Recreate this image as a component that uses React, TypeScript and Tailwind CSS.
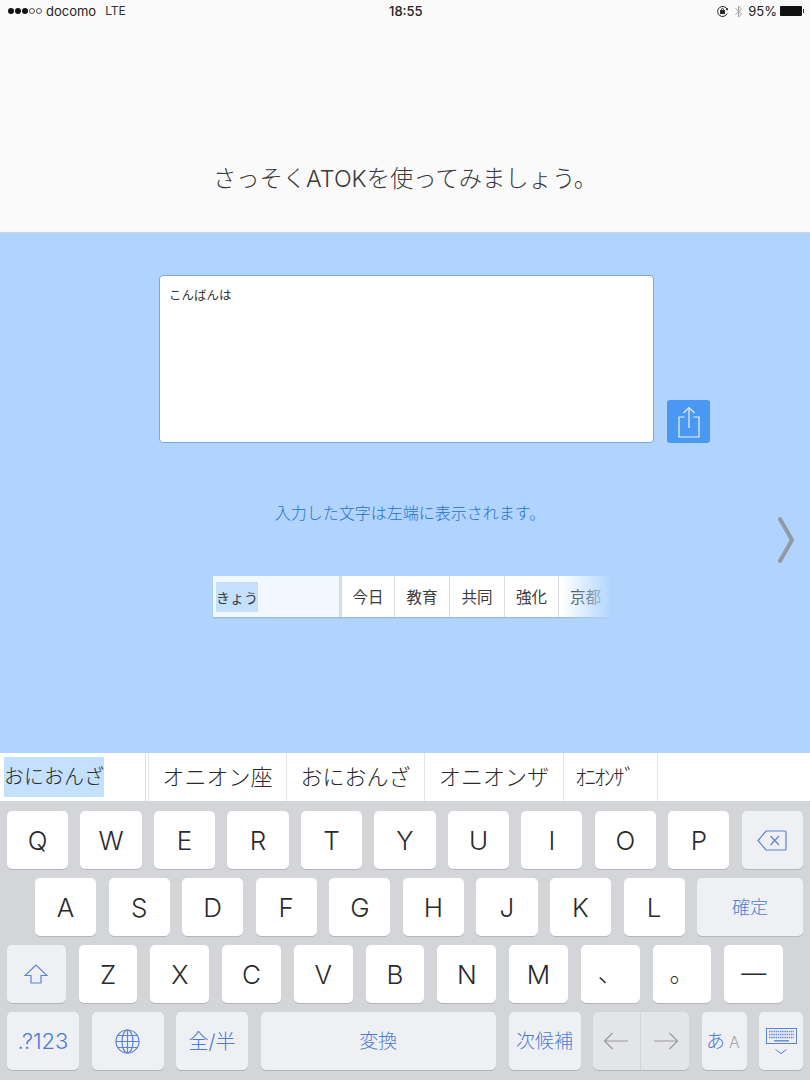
import { ReactNode } from 'react';

const FONT = "font-['Inter','Noto_Sans_CJK_JP',sans-serif]";

function StatusBar() {
    return (
        <div className="relative flex h-[22px] items-center pl-[8px] pr-[6px] text-[13px] leading-none text-[#222]">
            <div className="flex items-center">
                {[0, 1, 2].map((i) => (
                    <span key={i} className="mr-[1px] h-[6px] w-[6px] rounded-full bg-[#111]" />
                ))}
                {[0, 1].map((i) => (
                    <span key={i} className="mr-[1px] h-[6px] w-[6px] rounded-full border border-[#555]" />
                ))}
            </div>
            <span className="ml-[3px]">docomo</span>
            <span className="ml-[9px] text-[12px] text-[#333]">LTE</span>
            <span className="absolute left-[389px] top-[5px] font-medium">18:55</span>
            <div className="ml-auto flex items-center">
                <svg width="13" height="13" viewBox="0 0 13 13" fill="none" stroke="#222" strokeWidth="1">
                    <path d="M11.2 4.5A5 5 0 1 0 11.2 8.5" />
                    <path d="M10 4.6l1.4.2.2-1.6" />
                    <rect x="4.6" y="5.6" width="3.8" height="3" fill="#222" />
                    <path d="M5.4 5.6V4.6a1.1 1.1 0 0 1 2.2 0v1" />
                </svg>
                <svg className="ml-[6px]" width="7" height="13" viewBox="0 0 7 13" fill="none" stroke="#999" strokeWidth="0.9">
                    <path d="M0.5 3.5l6 5.5-3 3V1l3 3-6 5.5" />
                </svg>
                <span className="ml-[6px]">95%</span>
                <div className="ml-[3px] flex items-center">
                    <div className="h-[10px] w-[22px] rounded-[1px] bg-[#111]" />
                    <div className="ml-[1px] h-[4px] w-[1px] bg-[#333]" />
                </div>
            </div>
        </div>
    );
}

function CandidateCell({ className, children }: { className: string; children: ReactNode }) {
    return <div className={`flex h-full items-center justify-center ${className}`}>{children}</div>;
}

function Key({ children, fn = false, className = 'flex-1' }: { children: ReactNode; fn?: boolean; className?: string }) {
    return (
        <div
            className={`flex h-[58px] items-center justify-center rounded-[5px] shadow-[0_1px_0_#b4b6bb] ${
                fn ? 'bg-[#eff0f3] font-light text-[#4a7bd6]' : 'bg-white text-[#2a2a2a]'
            } ${className}`}
        >
            {children}
        </div>
    );
}

function Letters({ keys }: { keys: string[] }) {
    return (
        <>
            {keys.map((k) => (
                <Key key={k}>
                    <span className="text-[26px] font-light">{k}</span>
                </Key>
            ))}
        </>
    );
}

function BackspaceIcon() {
    return (
        <svg width="30" height="21" viewBox="0 0 30 21" fill="none" stroke="#5b84d8" strokeWidth="1.2">
            <path d="M9 1h19a1 1 0 0 1 1 1v17a1 1 0 0 1-1 1H9L1 10.5z" />
            <path d="M13.5 6l8.5 9M22 6l-8.5 9" />
        </svg>
    );
}

function ShiftIcon() {
    return (
        <svg width="24" height="20" viewBox="0 0 24 20" fill="none" stroke="#5b84d8" strokeWidth="1.2">
            <path d="M12 1L1 11.5h6V19h10v-7.5h6z" />
        </svg>
    );
}

function GlobeIcon() {
    return (
        <svg width="25" height="25" viewBox="0 0 25 25" fill="none" stroke="#5b84d8" strokeWidth="1.2">
            <circle cx="12.5" cy="12.5" r="11.5" />
            <ellipse cx="12.5" cy="12.5" rx="5.5" ry="11.5" />
            <path d="M12.5 1v23M1 12.5h23M2.8 6.5h19.4M2.8 18.5h19.4" />
        </svg>
    );
}

function ArrowIcon({ flip = false }: { flip?: boolean }) {
    return (
        <svg width="26" height="18" viewBox="0 0 26 18" fill="none" stroke="#9a9a9e" strokeWidth="1.2" className={flip ? 'rotate-180' : ''}>
            <path d="M25 9H1.5M9.5 1L1.5 9l8 8" />
        </svg>
    );
}

function KeyboardIcon() {
    return (
        <div className="flex flex-col items-center gap-[5px]">
            <svg width="31" height="16" viewBox="0 0 31 16" fill="none" stroke="#5b84d8">
                <rect x="0.5" y="0.5" width="30" height="15" strokeWidth="1" />
                <path d="M3 3.5h25M3 6.5h25M3 9.5h25" strokeWidth="1.6" strokeDasharray="1.4 0.8" />
                <path d="M8 12.8h15" strokeWidth="1.4" />
            </svg>
            <svg width="12" height="5" viewBox="0 0 12 5" fill="none" stroke="#5b84d8" strokeWidth="1">
                <path d="M0.5 0.5L6 4.5l5.5-4" />
            </svg>
        </div>
    );
}

function Keyboard() {
    return (
        <div className="flex flex-col gap-[9px] bg-[#d3d5d9] pt-[10px] h-[279px]">
            <div className="flex gap-[12.4px] px-[7px]">
                <Letters keys={['Q', 'W', 'E', 'R', 'T', 'Y', 'U', 'I', 'O', 'P']} />
                <Key fn>
                    <BackspaceIcon />
                </Key>
            </div>
            <div className="flex gap-[12.4px] pl-[35px] pr-[7px]">
                <Letters keys={['A', 'S', 'D', 'F', 'G', 'H', 'J', 'K', 'L']} />
                <Key fn className="w-[106px] shrink-0">
                    <span className="text-[18px]">確定</span>
                </Key>
            </div>
            <div className="flex gap-[13px] pl-[7px] pr-[27px]">
                <Key fn>
                    <ShiftIcon />
                </Key>
                <Letters keys={['Z', 'X', 'C', 'V', 'B', 'N', 'M']} />
                {['、', '。', '—'].map((k) => (
                    <Key key={k}>
                        <span className="text-[25px] font-light">{k}</span>
                    </Key>
                ))}
            </div>
            <div className="flex gap-[12.5px] px-[7px]">
                <Key fn className="w-[72px]">
                    <span className="pt-[1px] text-[22px]">.?123</span>
                </Key>
                <Key fn className="w-[72px]">
                    <GlobeIcon />
                </Key>
                <Key fn className="w-[72px]">
                    <span className="pt-[2px] text-[20px]">全/半</span>
                </Key>
                <Key fn className="flex-1">
                    <span className="pt-[2px] text-[19px]">変換</span>
                </Key>
                <Key fn className="w-[72px]">
                    <span className="pt-[2px] text-[19px]">次候補</span>
                </Key>
                <div className="flex h-[58px] w-[96px] rounded-[5px] bg-[#e4e5e8] shadow-[0_1px_0_#b4b6bb]">
                    <div className="flex flex-1 items-center justify-center border-r border-[#d3d5d9]">
                        <ArrowIcon />
                    </div>
                    <div className="flex flex-1 items-center justify-center pl-[2px]">
                        <ArrowIcon flip />
                    </div>
                </div>
                <Key fn className="w-[45px]">
                    <span className="mr-[2px] flex items-center pt-[2px]">
                        <span className="text-[19px]">あ</span>
                        <span className="ml-[4px] text-[16px] text-[#a5a6a9]">A</span>
                    </span>
                </Key>
                <Key fn className="w-[44px]">
                    <KeyboardIcon />
                </Key>
            </div>
        </div>
    );
}

export default function App() {
    return (
        <div className={`relative flex h-[1080px] w-[810px] flex-col overflow-hidden bg-[#b0d4fe] ${FONT}`}>
            {/* Header */}
            <div className="h-[233px] border-b border-[#c9d6e4] bg-[#fafafa]">
                <StatusBar />
                <p className="mt-[139px] text-center text-[23.3px] font-light leading-9 text-[#3a3a3a]">
                    さっそくATOKを使ってみましょう。
                </p>
            </div>

            {/* Lesson area */}
            <div className="relative flex flex-1 flex-col">
                <div className="ml-[159px] mt-[42px] flex items-end gap-[13px]">
                    <div className="h-[168px] w-[495px] rounded-[4px] border border-[#78a8de] bg-white px-[9px] py-[10px] text-[12.5px] leading-[20px] text-[#333]">
                        こんばんは
                    </div>
                    <div className="flex h-[43px] w-[43px] items-center justify-center rounded-[3px] bg-[#4a98f2]">
                        <svg width="22" height="32" viewBox="0 0 22 32" fill="none" stroke="#eaf3ff" strokeWidth="1.2">
                            <path d="M6.5 11H1v20h20V11h-5.5" />
                            <path d="M11 22V1.5M5.5 7L11 1.5 16.5 7" />
                        </svg>
                    </div>
                </div>
                <p className="mt-[60px] pl-[10px] text-center text-[16px] font-light leading-5 text-[#2a70cc]">
                    入力した文字は左端に表示されます。
                </p>

                <svg
                    className="absolute left-[776px] top-[282px]"
                    width="20"
                    height="50"
                    viewBox="0 0 20 50"
                    fill="none"
                    stroke="#8f9aa6"
                    strokeWidth="4"
                    strokeLinecap="round"
                >
                    <path d="M4 4l12 21L4 46" />
                </svg>

                {/* Inline candidate sample */}
                <div className="relative ml-[213px] mt-[53px] flex h-[41px] w-[399px] items-stretch text-[15.5px] text-[#3a3a3a] shadow-[0_1px_1px_#9db8d8]">
                    <div className="flex w-[126px] items-center bg-[#f1f8ff] pl-[3px]">
                        <span className="flex h-[30px] items-center bg-[#c3e0fd] pt-[1px] text-[14px]">きょう</span>
                    </div>
                    <div className="w-[3px] bg-[#d8dde4]" />
                    <div className="flex flex-1 gap-[1px] bg-[#d9dee6]">
                        <CandidateCell className="w-[52px] bg-white pt-[2px]">今日</CandidateCell>
                        <CandidateCell className="w-[54px] bg-white pt-[2px]">教育</CandidateCell>
                        <CandidateCell className="w-[54px] bg-white pt-[2px]">共同</CandidateCell>
                        <CandidateCell className="w-[53px] bg-white pt-[2px]">強化</CandidateCell>
                        <CandidateCell className="flex-1 bg-white pt-[2px]">京都</CandidateCell>
                    </div>
                    <div className="absolute inset-y-[-1px] right-0 w-[50px] bg-gradient-to-r from-[#b0d4fe00] to-[#b0d4fe]" />
                </div>
            </div>

            {/* Keyboard candidates */}
            <div className="flex h-[48px] items-stretch bg-white text-[22px] font-light text-[#2a2a2a]">
                <div className="flex w-[146px] items-center border-r border-[#dcdde0] pl-[4px]">
                    <span className="flex h-[40px] items-center bg-[#c3e0fd] text-[20px]">おにおんざ</span>
                </div>
                <CandidateCell className="ml-[2px] w-[139px] border-x border-[#e3e4e7]">オニオン座</CandidateCell>
                <CandidateCell className="w-[138px] border-r border-[#e3e4e7]">おにおんざ</CandidateCell>
                <CandidateCell className="w-[139px] border-r border-[#e3e4e7]">オニオンザ</CandidateCell>
                <CandidateCell className="w-[94px] border-r border-[#e3e4e7] pr-[12px]">
                    <span className="whitespace-nowrap tracking-[-1.5px]">ｵﾆｵﾝｻﾞ</span>
                </CandidateCell>
            </div>

            <Keyboard />
        </div>
    );
}
